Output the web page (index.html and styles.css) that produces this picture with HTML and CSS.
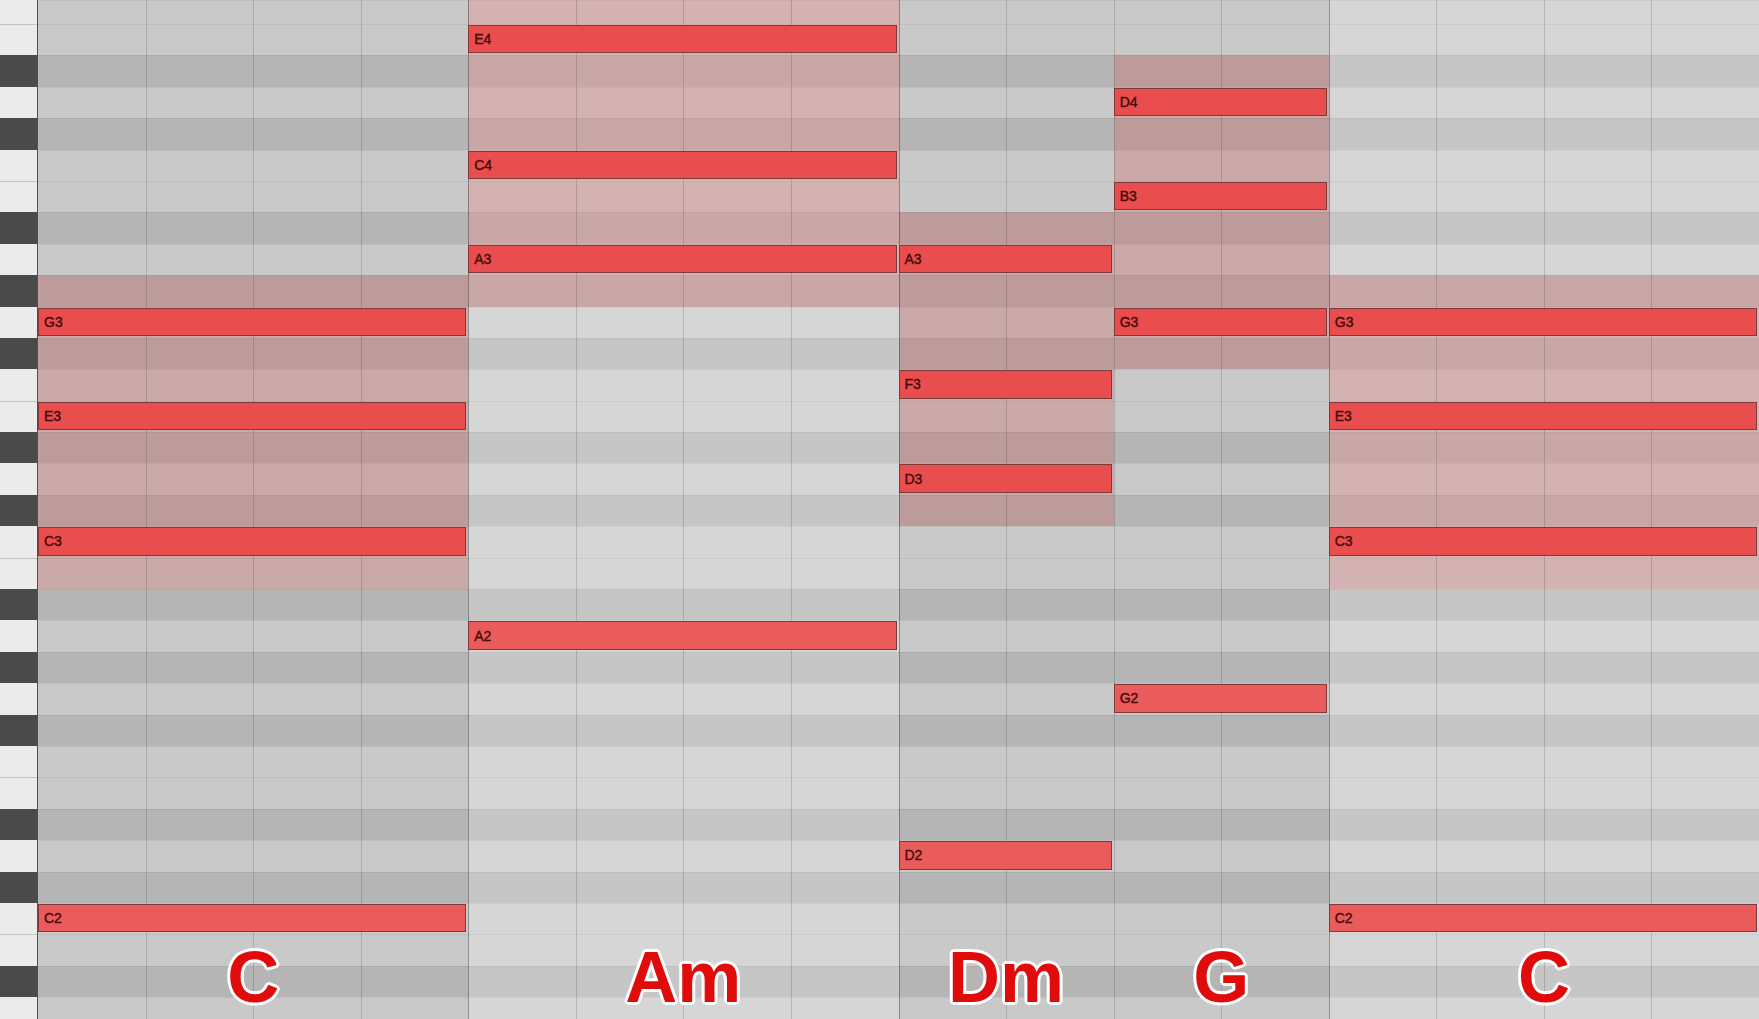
FILE: index.html
```html
<!DOCTYPE html>
<html>
<head>
    <title>Piano Roll - C Am Dm G C</title>
    <meta name="viewport" content="width=device-width, initial-scale=1.0">
    <link rel="stylesheet" href="styles.css">
</head>
<body>
<div class="roll">
    <div class="keys" id="keys"></div>
    <div class="grid" id="grid"></div>
</div>
<script>
// rows top to bottom, from F4 (cut off at the top) down to A1
const rows = ['F4','E4','D#4','D4','C#4','C4','B3','A#3','A3','G#3','G3','F#3','F3','E3','D#3','D3',
              'C#3','C3','B2','A#2','A2','G#2','G2','F#2','F2','E2','D#2','D2','C#2','C2','B1','A#1','A1'];

// each chord: columns (beats), highlight rows, chord tones, bass note
const chords = [
    { name: 'C',  from: 1,  to: 5,  hi: ['G#3', 'B2'],  notes: ['G3', 'E3', 'C3'], bass: 'C2' },
    { name: 'Am', from: 5,  to: 9,  hi: ['F4', 'G#3'],  notes: ['E4', 'C4', 'A3'], bass: 'A2' },
    { name: 'Dm', from: 9,  to: 11, hi: ['A#3', 'C#3'], notes: ['A3', 'F3', 'D3'], bass: 'D2' },
    { name: 'G',  from: 11, to: 13, hi: ['D#4', 'F#3'], notes: ['D4', 'B3', 'G3'], bass: 'G2' },
    { name: 'C',  from: 13, to: 17, hi: ['G#3', 'B2'],  notes: ['G3', 'E3', 'C3'], bass: 'C2' }
];

const keys = document.getElementById('keys');
const grid = document.getElementById('grid');

function rowOf(note) {
    return rows.indexOf(note) + 1;
}

function add(cls, row, col, text) {
    const el = document.createElement('div');
    el.className = cls;
    el.style.gridRow = row;
    el.style.gridColumn = col;
    if (text) el.textContent = text;
    grid.appendChild(el);
    return el;
}

rows.forEach(function(n, i) {
    const black = n.indexOf('#') > -1;
    const k = document.createElement('div');
    k.className = black ? 'key black' : 'key white';
    if (!black && i > 0 && rows[i - 1].indexOf('#') < 0) k.classList.add('split');
    keys.appendChild(k);
    add(black ? 'lane dark' : 'lane', i + 1, '1 / -1');
});

// every other bar is a shade lighter
add('bar-light', '1 / -1', '5 / 9');
add('bar-light', '1 / -1', '13 / 17');

chords.forEach(function(c) {
    add('span', rowOf(c.hi[0]) + ' / ' + (rowOf(c.hi[1]) + 1), c.from + ' / ' + c.to);
});

for (let b = 2; b <= 16; b++) {
    add(b === 5 || b === 9 || b === 13 ? 'line bar' : 'line', '1 / -1', b);
}

chords.forEach(function(c) {
    const col = c.from + ' / ' + c.to;
    c.notes.forEach(function(n) {
        add('note', rowOf(n), col, n);
    });
    add('note bass', rowOf(c.bass), col, c.bass);
    add('chord', '31 / 34', col, c.name);
});
</script>
</body>
</html>
```

FILE: styles.css
```css
body { margin: 0; background: #c9c9c9; font-family: "Liberation Sans", Arial, sans-serif; }
.roll { display: flex; height: 100vh; overflow: hidden; }
.keys { width: 37px; flex: none; border-right: 1px solid #505050; display: grid; grid-template-rows: 24px repeat(32, 31.4px); }
.key { box-sizing: border-box; }
.key.white { background: #ebebeb; }
.key.white.split { border-top: 1px solid #c4c4c4; }
.key.black { background: #4a4a4a; }
.grid { flex: 1; display: grid; grid-template-columns: repeat(16, 1fr); grid-template-rows: 24px repeat(32, 31.4px); }
.lane { background: #c9c9c9; border-top: 1px solid rgba(0,0,0,0.05); }
.lane.dark { background: #b5b5b5; }
.bar-light { background: rgba(255,255,255,0.24); }
.span { background: rgba(210,97,97,0.3); }
.line { border-left: 1px solid rgba(0,0,0,0.15); }
.line.bar { border-left-color: rgba(0,0,0,0.32); }
.note { margin: 1px 2px 2px 0; background: #e94d4d; border: 1px solid #7e3a3a; color: #450b0b; font-size: 14px; -webkit-text-stroke: 0.4px #450b0b;
    display: flex; align-items: center; padding-left: 5px; overflow: hidden; white-space: nowrap; }
.note.bass { background: #ea5c5c; }
.chord { align-self: start; justify-self: center; margin-top: 7px; font-size: 72px; line-height: 1; font-weight: bold; color: #e00b0b;
    text-shadow: 3px 0 #fff, -3px 0 #fff, 0 3px #fff, 0 -3px #fff, 2px 2px #fff, -2px 2px #fff, 2px -2px #fff, -2px -2px #fff, 0 0 3px #fff; }
```
